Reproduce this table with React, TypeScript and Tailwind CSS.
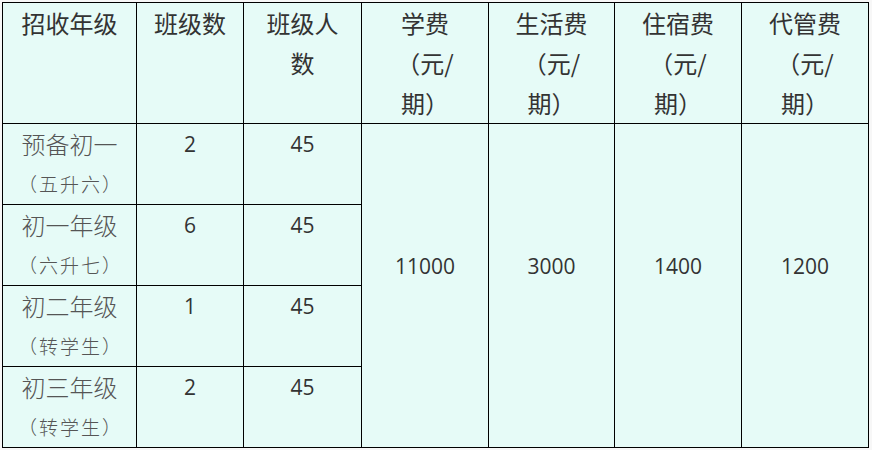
import React from "react"

const rows = [
  { grade: "预备初一", note: "（五升六）", classes: "2", size: "45" },
  { grade: "初一年级", note: "（六升七）", classes: "6", size: "45" },
  { grade: "初二年级", note: "（转学生）", classes: "1", size: "45" },
  { grade: "初三年级", note: "（转学生）", classes: "2", size: "45" },
]

const headers: React.ReactNode[] = [
  "招收年级",
  "班级数",
  "班级人数",
  <>学费<br />（元/<br />期）</>,
  <>生活费<br />（元/<br />期）</>,
  <>住宿费<br />（元/<br />期）</>,
  <>代管费<br />（元/<br />期）</>,
]

const fees = ["11000", "3000", "1400", "1200"]

const cjk = "font-['Noto_Sans_CJK_SC',sans-serif] [text-spacing-trim:space-all]"
const num = "font-['Open_Sans','Noto_Sans_CJK_SC',sans-serif]"

export default function App() {
  return (
    <div className="min-h-screen bg-[#f7f7f7] pl-[2px] pt-[2px]">
      <table className="table-fixed border-collapse w-[866px] bg-[#e6fbf7] text-center">
        <colgroup>
          <col className="w-[134px]" />
          <col className="w-[107px]" />
          <col className="w-[118px]" />
          <col className="w-[127px]" />
          <col className="w-[126px]" />
          <col className="w-[127px]" />
          <col className="w-[127px]" />
        </colgroup>
        <thead>
          <tr className={`h-[121px] ${cjk} text-[24px] leading-[40px] text-[#333]`}>
            {headers.map((h, i) => (
              <th key={i} className="border border-black align-top px-[15px] font-normal">{h}</th>
            ))}
          </tr>
        </thead>
        <tbody>
          {rows.map((r, i) => (
            <tr key={r.grade} className="h-[81px]">
              <td className={`border border-black align-top leading-[40px] text-[#555] font-light ${cjk}`}>
                <div className="text-[24px]">{r.grade}</div>
                <div className="text-[19px] tracking-[2px] pl-[2px]">{r.note}</div>
              </td>
              <td className={`border border-black align-top leading-[40px] text-[21px] text-[#333] ${num}`}>{r.classes}</td>
              <td className={`border border-black align-top leading-[40px] text-[21px] text-[#333] ${num}`}>{r.size}</td>
              {i === 0 &&
                fees.map(f => (
                  <td key={f} rowSpan={4} className={`border border-black align-middle leading-[40px] text-[21px] text-[#333] ${num}`}>
                    <div>{f}</div>
                    <div>&nbsp;</div>
                  </td>
                ))}
            </tr>
          ))}
        </tbody>
      </table>
    </div>
  )
}
